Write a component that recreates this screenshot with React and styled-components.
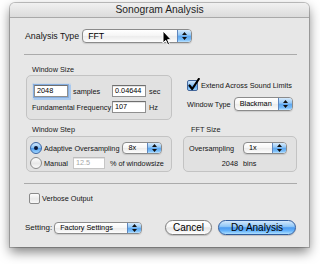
import React from 'react';
import styled, { createGlobalStyle } from 'styled-components';

const GlobalStyle = createGlobalStyle`
  html, body { margin: 0; padding: 0; background: #fff; }
  body { font-family: "Liberation Sans", Arial, sans-serif; color: #111; }
  * { box-sizing: border-box; }
`;

const Stage = styled.div`
  position: relative;
  width: 320px;
  height: 264px;
  padding: 3px 11px 0 10px;
  overflow: hidden;
`;

const Window = styled.div`
  width: 299px;
  height: 244px;
  background: #e7e7e7;
  border-radius: 5px 5px 0 0;
  box-shadow: 0 0 0 1px rgba(0, 0, 0, 0.22), 0 5px 12px rgba(0, 0, 0, 0.5);
  display: flex;
  flex-direction: column;
`;

const TitleBar = styled.div`
  height: 15px;
  border-radius: 5px 5px 0 0;
  background: linear-gradient(#f1f1f1, #dcdcdc);
  border-bottom: 1px solid #a9a9a9;
  text-align: center;
  font-size: 10.3px;
  line-height: 14px;
  color: #1e1e1e;
`;

const Content = styled.div`
  display: flex;
  flex-direction: column;
  padding: 0 12px 0 14px;
`;

const Row = styled.div`
  display: flex;
  align-items: center;
  gap: ${p => p.$gap ?? 3}px;
  margin-top: ${p => p.$top ?? 0}px;
  padding-left: ${p => p.$left ?? 0}px;
  height: ${p => p.$h ?? 12}px;
`;

const Label = styled.span`
  font-size: ${p => p.$size ?? 7.3}px;
  color: ${p => p.$muted ? '#9a9a9a' : '#141414'};
  white-space: nowrap;
  margin-left: ${p => p.$ml ?? 0}px;
  text-align: ${p => p.$right ? 'right' : 'left'};
  padding-right: ${p => p.$pr ?? 0}px;
`;

const Separator = styled.div`
  height: 1px;
  margin-top: ${p => p.$top}px;
  background: #ababab;
`;

const Sections = styled.div`
  display: grid;
  grid-template-columns: 146px 114px;
  column-gap: 11px;
  row-gap: 5px;
  margin-top: 10px;
  padding-left: 2px;
`;

const Group = styled.div`
  display: flex;
  flex-direction: column;
`;

const Legend = styled.div`
  font-size: 7.3px;
  line-height: 9px;
  height: 9px;
  color: #1a1a1a;
  padding-left: ${p => p.$indent}px;
  margin-bottom: ${p => p.$gap}px;
`;

const Box = styled.div`
  height: ${p => p.$h}px;
  border: 1px solid #c3c3c3;
  border-radius: 5px;
  background: #e1e1e1;
  padding: ${p => p.$pad};
  display: flex;
  flex-direction: column;
  gap: ${p => p.$gap}px;
`;

const FieldGrid = styled.div`
  display: grid;
  grid-template-columns: ${p => p.$cols};
  grid-auto-rows: 12px;
  row-gap: ${p => p.$gap}px;
  align-items: center;
`;

const Cell = styled.div`
  display: flex;
  align-items: center;
  gap: 5px;
  padding-left: ${p => p.$pl ?? 0}px;
`;

const Field = styled.div`
  width: ${p => p.$w}px;
  height: 12px;
  background: #fff;
  border: 1px solid ${p => p.$disabled ? '#c6c6c6' : '#8f8f8f'};
  border-top-color: ${p => p.$disabled ? '#bdbdbd' : '#6f6f6f'};
  font-size: 7.3px;
  line-height: 10px;
  padding-left: 2px;
  color: ${p => p.$disabled ? '#a8a8a8' : '#000'};
  box-shadow: ${p => p.$focus ? '0 0 0 1px #86aee0, 0 0 1px 2.5px #a9c9ef' : 'inset 0 1px 0 #e4e4e4'};
`;

const Side = styled.div`
  display: flex;
  flex-direction: column;
  padding: 15px 0 0 4px;
`;

const PopupBody = styled.div`
  width: ${p => p.$w}px;
  height: ${p => p.$h}px;
  display: flex;
  border: 1px solid #8b8b8b;
  border-radius: 4px;
  overflow: hidden;
  background: linear-gradient(#ffffff 0%, #f6f6f6 45%, #ececec 55%, #fdfdfd 100%);
  box-shadow: 0 1px 1px rgba(0, 0, 0, 0.12);
  margin-left: ${p => p.$ml ?? 0}px;
`;

const PopupText = styled.span`
  flex: 1;
  font-size: ${p => p.$size}px;
  line-height: ${p => p.$h - 2}px;
  padding-left: 5px;
  color: #000;
  white-space: nowrap;
`;

const PopupArrows = styled.span`
  width: 14px;
  display: flex;
  align-items: center;
  justify-content: center;
  border-left: 1px solid #5f86bd;
  background: linear-gradient(#d6eafc 0%, #95c8f5 42%, #5ea7ef 52%, #79bdf8 82%, #bfe4ff 100%);
`;

const CheckWrap = styled.span`
  position: relative;
  width: 11px;
  height: 11px;
  flex: none;
  border-radius: 2px;
  border: 1px solid ${p => p.$on ? '#44679c' : '#8a8a8a'};
  background: ${p => p.$on
    ? 'linear-gradient(#cfe5fb 0%, #8fc5f5 45%, #5aa5ef 55%, #9ad4ff 100%)'
    : 'linear-gradient(#fdfdfd, #e9e9e9 55%, #f8f8f8)'};
`;

const CheckMark = styled.svg`
  position: absolute;
  left: 0px;
  top: -3px;
`;

const Radio = styled.span`
  width: 12px;
  height: 12px;
  flex: none;
  border-radius: 50%;
  display: flex;
  align-items: center;
  justify-content: center;
  border: 1px solid ${p => p.$on ? '#3d66a3' : '#8c8c8c'};
  background: ${p => p.$on
    ? 'linear-gradient(#d2e7fc 0%, #8fc5f5 45%, #559fee 55%, #a2d8ff 100%)'
    : 'linear-gradient(#fdfdfd, #e8e8e8 55%, #fafafa)'};
  &::after {
    content: '';
    display: ${p => p.$on ? 'block' : 'none'};
    width: 4px;
    height: 4px;
    border-radius: 50%;
    background: #0b1633;
  }
`;

const BottomRow = styled.div`
  display: flex;
  align-items: center;
  height: 15px;
  margin-top: 16px;
  padding: 0 1px;
`;

const Spacer = styled.div`
  flex: 1;
`;

const Button = styled.div`
  width: ${p => p.$w}px;
  height: 15px;
  margin-left: ${p => p.$ml ?? 0}px;
  border-radius: 8px;
  display: flex;
  align-items: center;
  justify-content: center;
  font-size: 10px;
  color: #000;
  border: 1px solid ${p => p.$primary ? '#2f5b9c' : '#7e7e7e'};
  background: ${p => p.$primary
    ? 'linear-gradient(#d3e8fc 0%, #90c7f7 42%, #4d9bf0 52%, #64b2fb 75%, #aee0ff 100%)'
    : 'linear-gradient(#ffffff 0%, #f6f6f6 45%, #e6e6e6 52%, #f3f3f3 80%, #ffffff 100%)'};
  box-shadow: 0 1px 1px rgba(0, 0, 0, 0.18);
`;

const Cursor = styled.svg`
  position: absolute;
  left: 162px;
  top: 30px;
`;

function Popup({ w, h = 12, size = 7.3, ml, children }) {
  return (
    <PopupBody $w={w} $h={h} $ml={ml}>
      <PopupText $size={size} $h={h}>{children}</PopupText>
      <PopupArrows>
        <svg width="5" height="8" viewBox="0 0 5 8">
          <path d="M2.5 0 L5 3 L0 3 Z M0 5 L5 5 L2.5 8 Z" fill="#111" />
        </svg>
      </PopupArrows>
    </PopupBody>
  );
}

function Checkbox({ on }) {
  return (
    <CheckWrap $on={on}>
      {on && (
        <CheckMark width="12" height="13" viewBox="0 0 12 13">
          <path d="M1.5 7.5 L4.2 11 L10.8 1" stroke="#000" strokeWidth="2.2" fill="none" strokeLinecap="round" strokeLinejoin="round" />
        </CheckMark>
      )}
    </CheckWrap>
  );
}

export default function App() {
  return (
    <Stage>
      <GlobalStyle />
      <Window>
        <TitleBar>Sonogram Analysis</TitleBar>
        <Content>
          <Row $top={11} $left={1} $h={14}>
            <Label $size={8.8}>Analysis Type</Label>
            <Popup w={110} h={14} size={8.8}>FFT</Popup>
          </Row>

          <Separator $top={11} />

          <Sections>
            <Group>
              <Legend $indent={6} $gap={1}>Window Size</Legend>
              <Box $h={45} $pad="9px 0 0 5px" $gap={0}>
                <FieldGrid $cols="80px 34px auto" $gap={4}>
                  <Cell $pl={2}>
                    <Field $w={34} $focus>2048</Field>
                    <Label>samples</Label>
                  </Cell>
                  <Field $w={34}>0.04644</Field>
                  <Label $ml={3}>sec</Label>
                  <Label>Fundamental Frequency</Label>
                  <Field $w={34}>107</Field>
                  <Label $ml={3}>Hz</Label>
                </FieldGrid>
              </Box>
            </Group>

            <Side>
              <Row $h={11} $gap={3}>
                <Checkbox on />
                <Label>Extend Across Sound Limits</Label>
              </Row>
              <Row $top={6} $h={14} $gap={3}>
                <Label>Window Type</Label>
                <Popup w={59} h={14}>Blackman</Popup>
              </Row>
            </Side>

            <Group>
              <Legend $indent={6} $gap={2}>Window Step</Legend>
              <Box $h={36} $pad="5px 0 0 3px" $gap={3}>
                <Row $gap={2}>
                  <Radio $on />
                  <Label>Adaptive Oversampling</Label>
                  <Popup w={40} ml={1}>8x</Popup>
                </Row>
                <Row $gap={2}>
                  <Radio />
                  <Label>Manual</Label>
                  <Field $w={32} $disabled style={{ marginLeft: 3 }}>12.5</Field>
                  <Label $ml={3}>% of windowsize</Label>
                </Row>
              </Box>
            </Group>

            <Group>
              <Legend $indent={8} $gap={2}>FFT Size</Legend>
              <Box $h={36} $pad="5px 0 0 5px" $gap={0}>
                <FieldGrid $cols="54px auto" $gap={3}>
                  <Label>Oversampling</Label>
                  <Popup w={44}>1x</Popup>
                  <Label $right $pr={5}>2048</Label>
                  <Label>bins</Label>
                </FieldGrid>
              </Box>
            </Group>
          </Sections>

          <Separator $top={11} />

          <Row $top={9} $left={5} $h={11} $gap={2}>
            <Checkbox />
            <Label>Verbose Output</Label>
          </Row>

          <BottomRow>
            <Label $size={8}>Setting:</Label>
            <Popup w={88} ml={2}>Factory Settings</Popup>
            <Spacer />
            <Button $w={47}>Cancel</Button>
            <Button $w={78} $ml={6} $primary>Do Analysis</Button>
          </BottomRow>
        </Content>
      </Window>

      <Cursor width="10" height="16" viewBox="0 0 10 16">
        <path d="M1 1 L1 13 L3.8 10.4 L5.8 15 L7.6 14.2 L5.6 9.7 L9.2 9.7 Z" fill="#000" stroke="#fff" strokeWidth="1" strokeLinejoin="round" />
      </Cursor>
    </Stage>
  );
}
